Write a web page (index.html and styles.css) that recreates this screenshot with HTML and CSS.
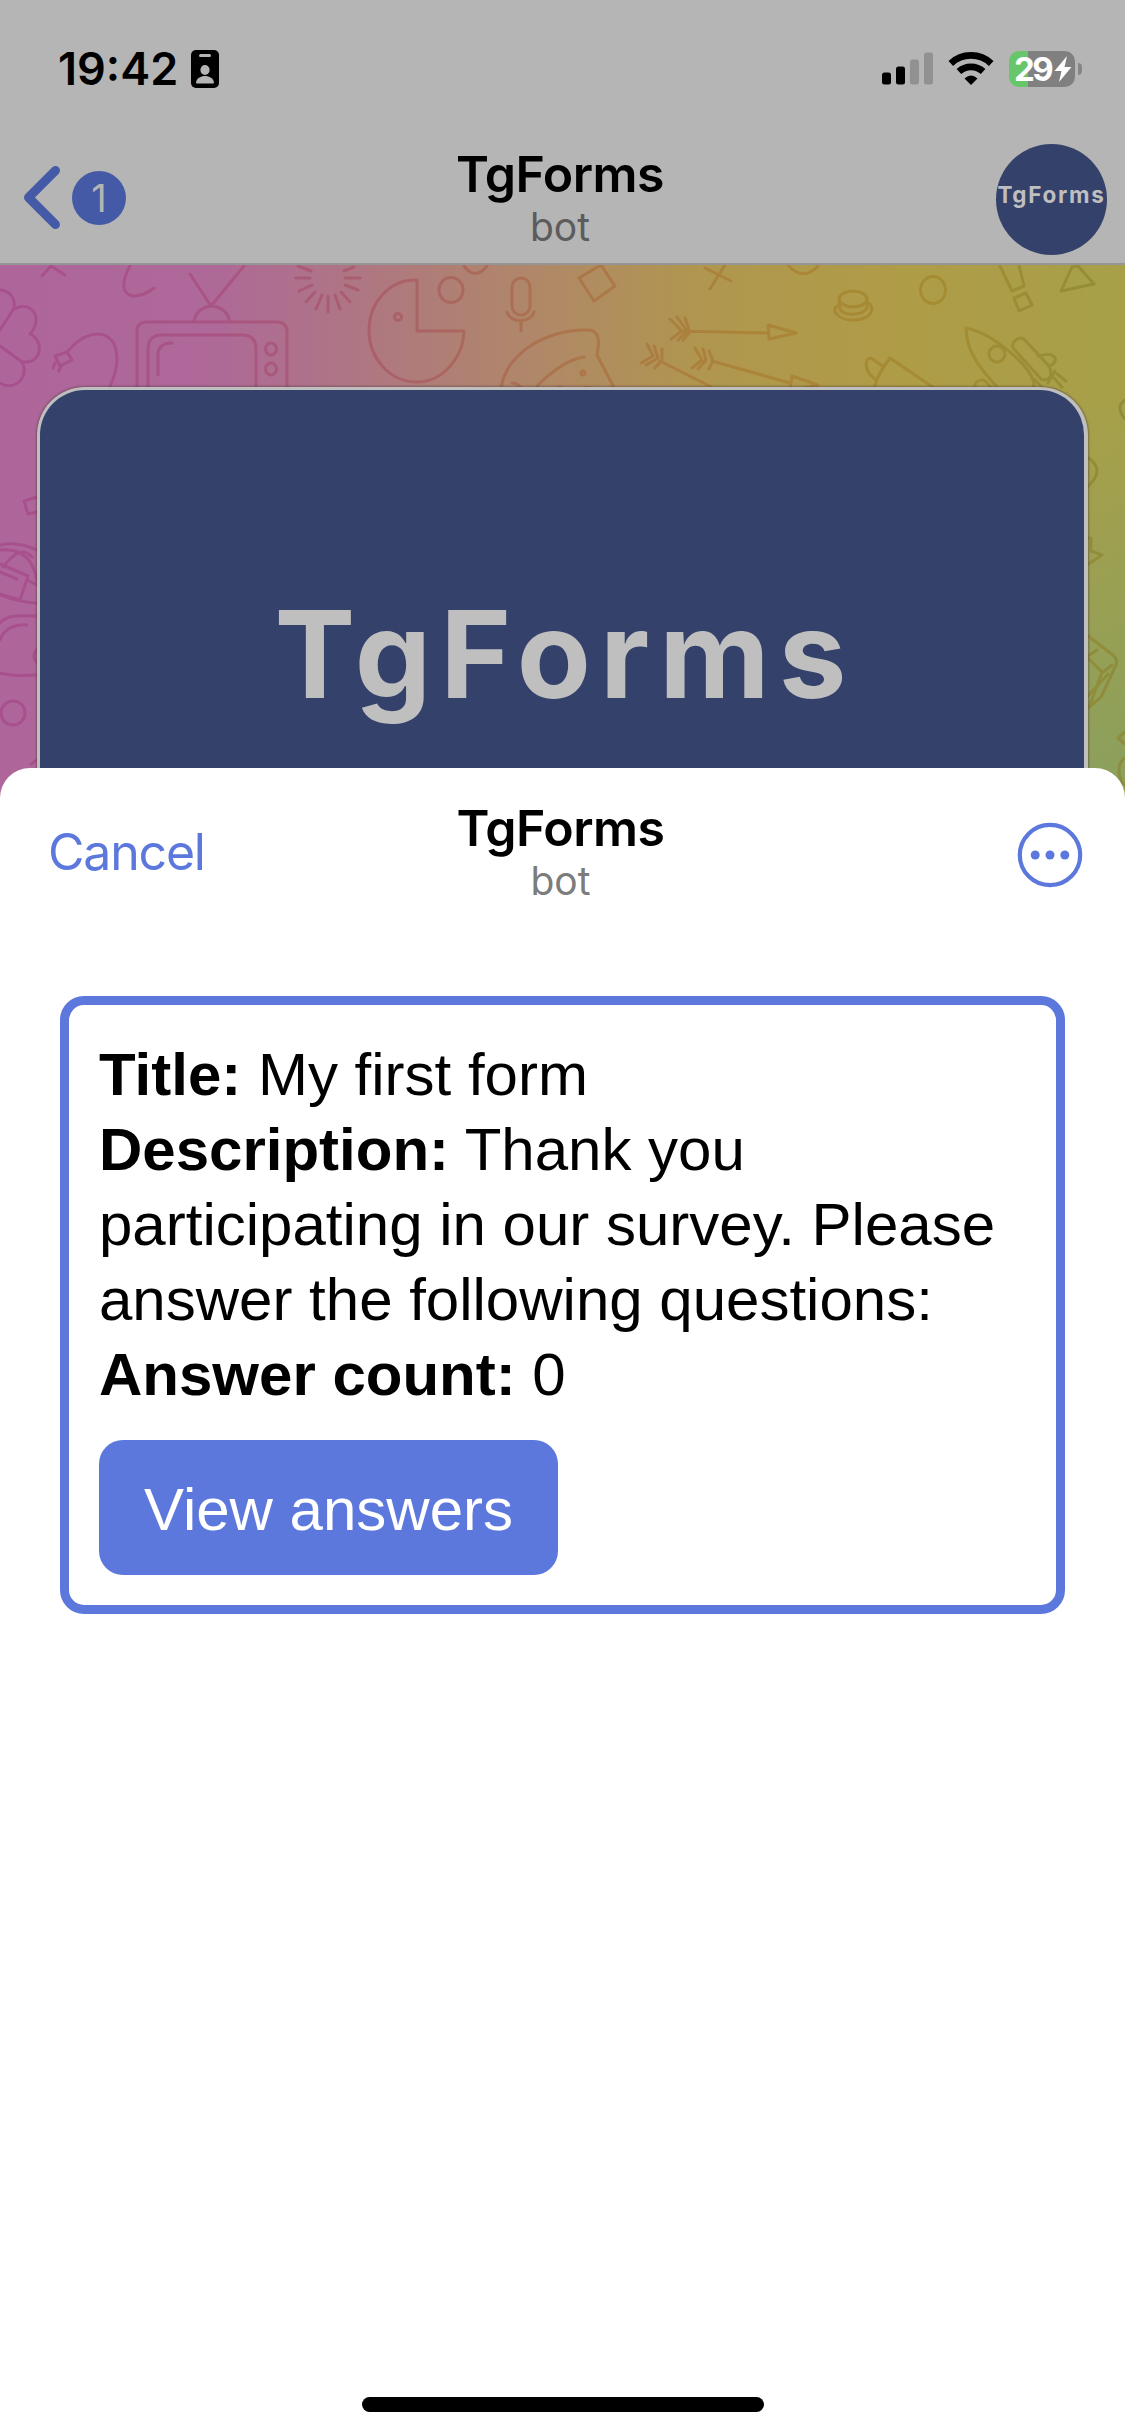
FILE: index.html
```
<!DOCTYPE html>
<html lang="en">
<head>
<meta charset="utf-8">
<title>TgForms</title>
<link rel="stylesheet" href="styles.css">
</head>
<body>
<div class="screen">
  <header class="chat-top">
    <div class="status-bar">
      <span class="clock">19:42</span>
      <svg class="id-badge" width="28" height="38" viewBox="0 0 28 38"><rect width="28" height="38" rx="5"/><rect x="8" y="4" width="12" height="3" rx="1.5" fill="#b5b5b5"/><ellipse cx="14" cy="20" rx="4.6" ry="5" fill="#b5b5b5"/><path d="M5 32.5C6 23.800 22 23.800 23 32.500Q23 33.500 22 33.500H6Q5 33.500 5 32.500Z" fill="#b5b5b5"/></svg>
      <div class="status-icons">
        <svg width="51" height="33" viewBox="0 0 51 33"><rect y="20.500" width="9" height="12" rx="2.500"/><rect x="14" y="14.500" width="9" height="18" rx="2.500"/><rect x="28" y="7.500" width="9" height="25" rx="2.500" fill="#919191"/><rect x="42" y=".5" width="9" height="32" rx="2.500" fill="#919191"/></svg>
        <svg class="wifi" width="46" height="34" viewBox="0 0 46 34"><g fill="none" stroke="#000" stroke-width="6.800"><path d="M2.800 11.400A29.500 29.500 0 0 1 43.200 11.400"/><path d="M10.900 19.500A18 18 0 0 1 35.100 19.500"/></g><path d="M16.500 26.500Q23 20.500 29.500 26.500L23 33Z"/></svg>
        <div class="battery"><span>29</span><svg width="18" height="26" viewBox="0 0 18 26"><path d="M13 0L.5 15H7.500L5 26L17.500 11H10.500Z" fill="#fff"/></svg></div>
        <i class="battery-tip"></i>
      </div>
    </div>
    <nav class="chat-nav">
      <div class="back">
        <svg width="36" height="64" viewBox="0 0 36 64"><path d="M31.500 4.500L4.500 31.500L31.500 58.500" fill="none" stroke="#445aa6" stroke-width="9" stroke-linecap="round" stroke-linejoin="round"/></svg>
        <span class="unread">1</span>
      </div>
      <div class="heading"><b>TgForms</b><span>bot</span></div>
      <div class="avatar"><span>TgForms</span></div>
    </nav>
  </header>

  <main class="chat">
    <svg class="doodles" width="1125" height="536" viewBox="0 264 1125 536">
      <defs><linearGradient id="ink" x1="0" x2="1125" y1="0" y2="0" gradientUnits="userSpaceOnUse"><stop offset="0" stop-color="#a64b8b"/><stop offset=".2" stop-color="#a8507f"/><stop offset=".36" stop-color="#aa5c62"/><stop offset=".5" stop-color="#ac7046"/><stop offset=".66" stop-color="#ab8034"/><stop offset=".85" stop-color="#a28a2d"/><stop offset="1" stop-color="#8b8837"/></linearGradient></defs>
      <g class="lines" stroke="url(#ink)">
        <path d="M42 275L51 265L65 274M0 289C14 290 16 303 13 309C25 300 40 309 35 325Q33 330 30 333C45 340 41 362 25 361Q22 361 20 360M13 309L0 329M0 345L22 361C29 375 17 388 4 384L0 382"/>
        <path d="M130 265C113 296 134 302 154 287M104 396C118 374 120 354 113 341C103 327 83 332 67 351M55 355L67 351L72 359L60 365ZM55 362L53 367M61 364L59 370"/>
        <path d="M190 273L211 305L244 265M194 321C197 300 226 300 230 321M137 398V330Q137 321 147 321H277Q287 321 287 331V398M148 398V348Q148 334 162 334H242Q256 334 256 348V398M158 374V354Q158 342 172 342M265 392H277"/>
        <ellipse cx="271" cy="348" rx="5.500" ry="6"/><ellipse cx="271" cy="368" rx="5.500" ry="6"/>
        <path d="M298 265L311 270M296 277H310M299 290L312 284M306 301L315 291M316 308L322 294M328 311V295M340 308L335 294M350 301L341 291M358 289L345 284M360 277H345M354 266L344 270"/>
        <path d="M417 279V330H464C464 353 445 381 417 381C388 381 369 355 369 330C369 301 390 278 417 279Z"/><circle cx="398" cy="316" r="3.500"/><ellipse cx="451" cy="289" rx="12" ry="12.500"/><path d="M464 265Q475 280 487 265"/>
        <rect x="512" y="277" width="18" height="37" rx="9"/><path d="M507 311C511 323 531 322 534 311M521 320V330"/>
        <path d="M501 395C499 358 542 327 590 329Q602 331 597 354L619 396M512 382Q522 382 525 397M537 385Q563 359 584 356M582 397C577 383 591 383 602 396"/><circle cx="583" cy="372" r="2"/><circle cx="560" cy="387" r="1"/>
        <path d="M579 277L601 264L615 285L594 300ZM705 267L731 280M725 264L710 288M788 264Q803 281 818 265"/>
        <path d="M680 330L768 332M670 318L682 330L671 338M677 316L687 330L678 339M685 317L690 331L683 339M768 324L796 332L769 338ZM660 360L735 398M641 362L653 355L647 343M646 364L658 357L654 345M655 367L662 359L662 348M712 360L790 382M692 367L702 359L695 347M698 368L706 359L703 348M709 368L713 360L709 350M792 375L818 384L790 390Z"/>
        <ellipse cx="853" cy="298" rx="14" ry="8"/><path d="M839 298L840 308C844 316 863 314 867 307L867 297M839 304C828 309 840 320 855 319C871 318 877 307 867 301"/>
        <ellipse cx="933" cy="289" rx="12.500" ry="13.500"/><path d="M1000 265L1012 290L1024 285L1019 264M1014 297L1026 292L1032 304L1019 310ZM1061 290L1072 266L1078 265L1094 283Z"/>
        <path d="M872 397Q875 375 890 357L937 389L932 397M875 378C864 370 864 357 871 357L884 366M892 396V388L899 387L901 397M902 395L911 394"/>
        <path d="M966 327C992 332 1030 364 1034 382Q1033 398 1026 398M966 327C966 354 985 373 1008 398M1013 347C1011 340 1020 335 1024 338L1049 365Q1055 379 1042 379L1013 347ZM1038 355C1055 350 1061 359 1049 366M980 398C968 386 978 376 985 380L1003 398M1034 378L1042 386L1037 397M1048 382L1055 370M1057 373L1066 380M1054 377L1062 386"/><circle cx="997" cy="353" r="8"/>
        <path d="M37 496L24 500L28 513L37 511M0 544C12 541 26 544 37 549M0 549C20 547 33 556 37 580M3 566C17 548 25 548 32 556M0 563L28 575L20 599L0 593M0 571L17 578M27 579L37 584M0 594C16 600 26 602 37 602M0 622C8 613 20 615 37 615M0 639C4 627 16 623 27 624M0 672C12 676 28 674 37 674M37 648Q31 656 37 661M31 763L37 759"/><circle cx="13" cy="712" r="12"/>
        <path d="M1125 399Q1115 406 1125 418M1087 456Q1107 469 1087 486M1087 537H1091V550L1102 554L1087 564M1087 634L1114 655Q1118 660 1116 664L1101 696L1087 708M1088 657L1102 671L1090 704M1088 655L1097 649M1102 672L1112 664M1088 695L1108 673M1125 731L1118 737L1125 743M1125 757C1117 761 1117 777 1125 784"/>
      </g>
    </svg>
    <div class="banner"><span>TgForms</span></div>
  </main>

  <section class="sheet">
    <div class="sheet-nav">
      <span class="cancel">Cancel</span>
      <div class="heading"><b>TgForms</b><span>bot</span></div>
      <svg class="more" width="66" height="66" viewBox="0 0 66 66"><circle cx="33" cy="33" r="30.200" fill="none" stroke="#5c78dd" stroke-width="4.200"/><g fill="#5c78dd"><circle cx="18.200" cy="33" r="4.500"/><circle cx="33" cy="33" r="4.500"/><circle cx="47.800" cy="33" r="4.500"/></g></svg>
    </div>
    <article class="form-card">
      <p><b>Title:</b> My first form</p>
      <p><b>Description:</b> Thank you participating in our survey. Please answer the following questions:</p>
      <p><b>Answer count:</b> 0</p>
      <button class="view">View answers</button>
    </article>
    <i class="home-indicator"></i>
  </section>
</div>
</body>
</html>
```
FILE: styles.css
```
* { box-sizing: border-box; }
body { margin: 0; font-family: Inter, "Liberation Sans", sans-serif; color: #000; }
.screen { width: 1125px; height: 2436px; overflow: hidden; display: flex; flex-direction: column; background: #fff; }

.chat-top { height: 265px; flex: none; background: #b5b5b5; border-bottom: 2px solid #959595; }
.status-bar { height: 132px; display: flex; align-items: flex-start; padding: 50px 43px 0 58px; }
.clock { width: 121px; font-size: 45px; font-weight: 600; line-height: 38px; white-space: nowrap; }
.id-badge { margin-left: 12px; }
.status-icons { margin-left: auto; display: flex; align-items: flex-start; padding-top: 2px; }
.wifi { margin-left: 15px; }
.battery { width: 66px; height: 36px; margin: -1px 0 0 15px; padding-left: 5px; border-radius: 10px; display: flex; align-items: center; color: #fff; font-size: 33px; font-weight: 700; letter-spacing: -2.500px; background: linear-gradient(90deg, #67c66a 19px, #808080 19px); }
.battery span { width: 40px; }
.battery-tip { width: 4px; height: 12px; margin: 11px 0 0 3px; border-radius: 0 4px 4px 0; background: #868686; }

.chat-nav { height: 131px; display: grid; grid-template-columns: 1fr auto 1fr; padding: 0 18px 0 24px; }
.back { display: flex; align-items: center; gap: 12px; height: 132px; }
.unread { width: 54px; height: 54px; border-radius: 50%; background: #445aa6; color: #b5b5b5; font-size: 38px; line-height: 54px; text-align: center; }
.heading { display: flex; flex-direction: column; align-items: center; margin-right: 11px; }
.heading b { font-size: 50px; font-weight: 600; line-height: 60px; margin-top: 12px; letter-spacing: -.5px; }
.heading span { font-size: 39px; line-height: 46px; color: #5c5c5c; }
.avatar { justify-self: end; width: 111px; height: 111px; margin-top: 12px; border-radius: 50%; background: #34416a; color: #bfbfbf; overflow: hidden; display: flex; justify-content: center; font-size: 22.500px; font-weight: 700; letter-spacing: 1.700px; line-height: 101px; white-space: nowrap; }

.chat { position: relative; height: 535px; flex: none; padding: 122px 37px 0; background: linear-gradient(180deg, transparent 25%, rgba(92, 160, 125, .55) 130%) right / 260px 100% no-repeat, linear-gradient(90deg, #ae669a 0, #ae6899 18%, #ae728a 28%, #af7e76 39%, #b08966 49%, #b0964f 62%, #af9c47 80%, #a7a049 100%); }
.doodles { position: absolute; left: 0; top: 0; }
.lines { fill: none; stroke-width: 3; stroke-linejoin: round; stroke-linecap: round; opacity: .8; }
.banner { position: relative; height: 480px; border: 3px solid #bfbfbf; border-right-width: 4px; border-radius: 48px 48px 0 0; background: #34416a; box-shadow: 0 0 2px 1px rgba(70, 50, 50, .45); display: flex; justify-content: center; color: #bfbfbf; font-size: 121px; font-weight: 700; letter-spacing: 9px; line-height: 146px; padding: 191px 0 0 6px; }

.sheet { position: relative; margin-top: -32px; flex: 1; display: flex; flex-direction: column; border-radius: 30px 30px 0 0; background: #fff; }
.sheet-nav { height: 174px; display: grid; grid-template-columns: 1fr auto 1fr; padding: 18px 42px 0 48px; }
.sheet-nav .heading { margin-right: 10px; }
.cancel { font-size: 50px; line-height: 60px; margin-top: 36px; color: #5c78dd; letter-spacing: -1.200px; }
.sheet-nav .heading span { color: #7c7c7c; }
.more { justify-self: end; margin-top: 36px; }
.form-card { margin: 54px 60px 0; height: 618px; padding: 32px 30px 28px; border: 9px solid #5c78dd; border-radius: 24px; font: 60px/75px "Liberation Sans", sans-serif; }
.form-card p { margin: 0; }
.view { display: block; margin-top: 28px; width: 459px; height: 135px; padding: 3px 0 0; border: 0; border-radius: 24px; background: #5c78dd; color: #fff; font: inherit; }
.home-indicator { width: 402px; height: 15px; margin: auto auto 24px; border-radius: 8px; background: #000; }
```
